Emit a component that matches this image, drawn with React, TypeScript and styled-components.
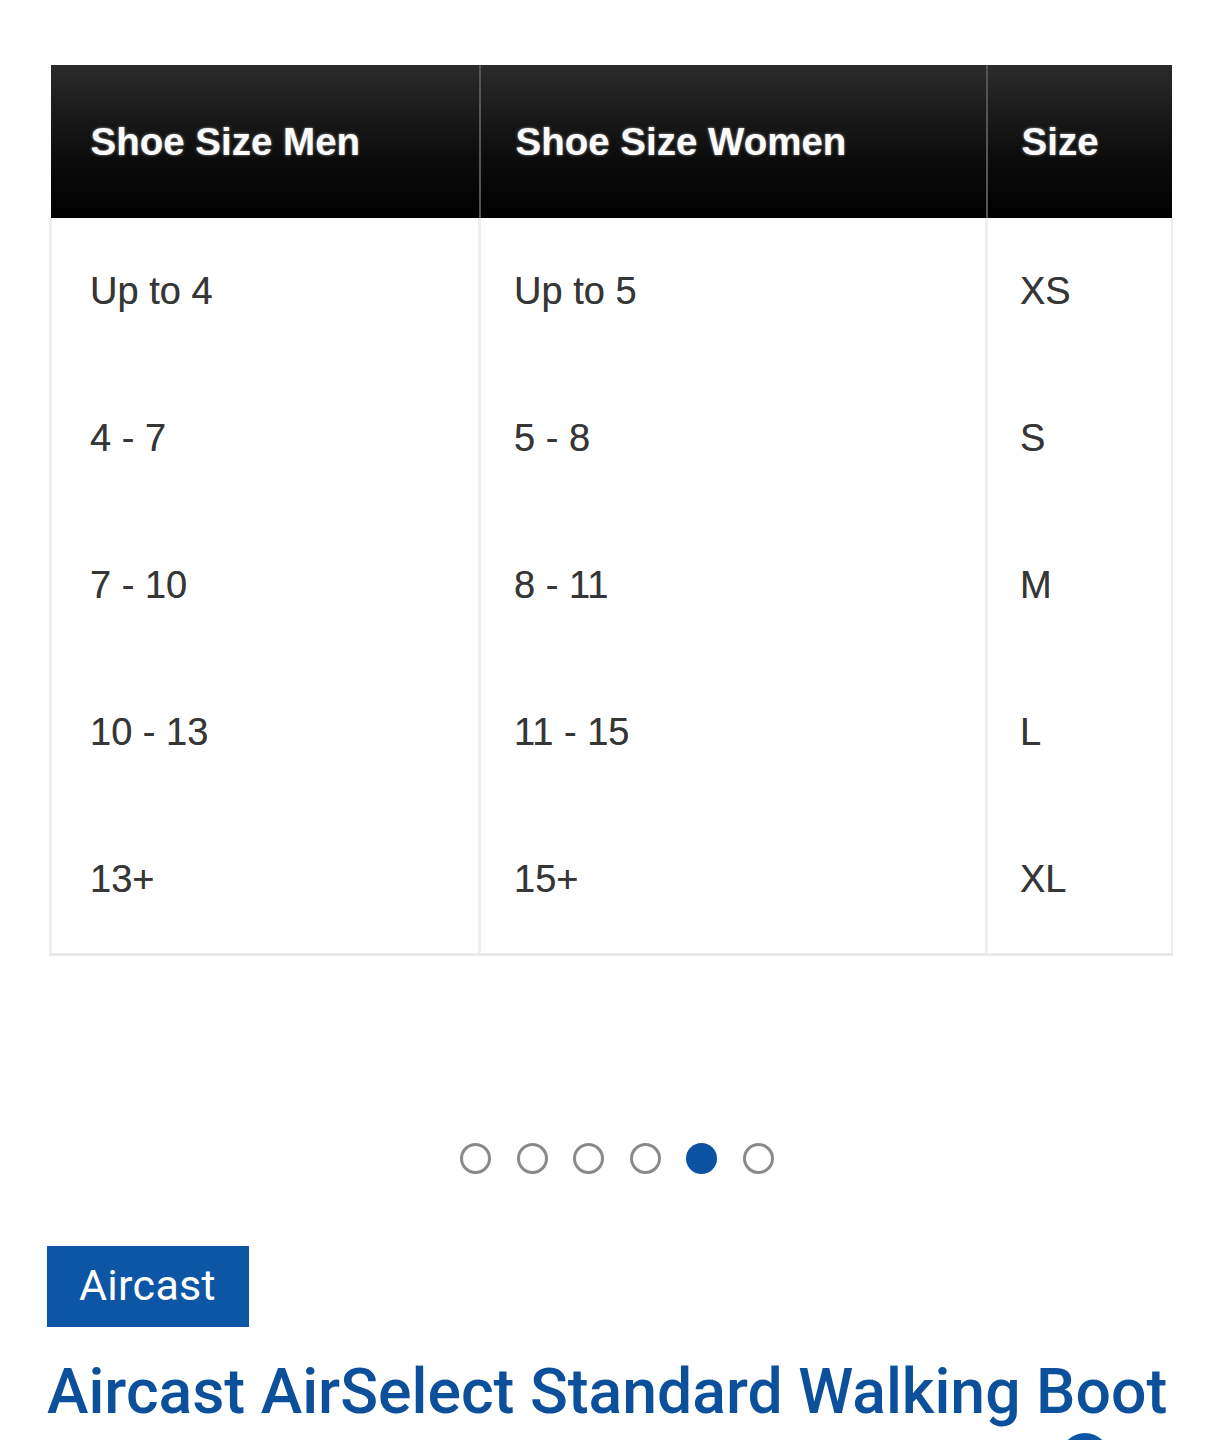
import styled, { createGlobalStyle } from "styled-components";

const GlobalStyle = createGlobalStyle`
    body {
        margin: 0;
        background: #ffffff;
    }
`;

const Page = styled.div`
    width: 1222px;
    height: 1440px;
    overflow: hidden;
    box-sizing: border-box;
    padding-top: 65px;
`;

const Chart = styled.table`
    margin-left: 49px;
    width: 1121px;
    border-collapse: collapse;
    table-layout: fixed;
    font-family: "Liberation Sans", Arial, sans-serif;
`;

const HeadCell = styled.th<{ $w: number; $pad: number }>`
    width: ${p => p.$w}px;
    height: 153px;
    padding: 0 0 0 ${p => p.$pad + 2}px;
    box-sizing: border-box;
    text-align: left;
    font-size: 38.5px;
    font-weight: 700;
    color: #fbfbfb;
    text-shadow: 0 0 3px rgba(255, 255, 255, 0.55);
    background: linear-gradient(#2b2b2b, #0c0c0c 60%, #000);
    border-left: 2px solid #555;
    &:first-child {
        border-left: none;
    }
`;

const Cell = styled.td<{ $pad: number }>`
    height: 147px;
    padding: 0 0 0 ${p => p.$pad}px;
    font-size: 38px;
    color: #363636;
    text-shadow: 0 0 0.6px rgba(0, 0, 0, 0.5);
    border-left: 3px solid #eeeeee;
    &:last-child {
        border-right: 2px solid #eeeeee;
    }
`;

const BodyRow = styled.tr`
    &:last-child td {
        border-bottom: 3px solid #e9e9e9;
    }
`;

const Dots = styled.div`
    display: flex;
    justify-content: center;
    gap: 25.5px;
    margin-top: 187px;
    padding-left: 12px;
`;

const Dot = styled.span<{ $active?: boolean }>`
    width: 31px;
    height: 31px;
    border-radius: 50%;
    box-sizing: border-box;
    border: ${p => (p.$active ? "none" : "3px solid #8a8a8a")};
    background: ${p => (p.$active ? "#0b52a2" : "transparent")};
`;

const Info = styled.div`
    padding: 72px 0 0 47px;
    font-family: Roboto, "Liberation Sans", sans-serif;
`;

const Brand = styled.div`
    display: inline-block;
    width: 202px;
    height: 81px;
    box-sizing: border-box;
    padding-left: 32px;
    background: #0d56a6;
    color: #ffffff;
    font-size: 43px;
    letter-spacing: 0.3px;
    line-height: 78px;
`;

const Title = styled.h1`
    margin: 25px 0 0 0;
    color: #0c4f9b;
    font-size: 62.5px;
    font-weight: 500;
    line-height: 80px;
    white-space: nowrap;
`;

const Badge = styled.span`
    display: block;
    width: 50px;
    height: 50px;
    margin: 1px 0 0 1013px;
    border-radius: 50%;
    background: #0d56a6;
`;

const rows = [
    ["Up to 4", "Up to 5", "XS"],
    ["4 - 7", "5 - 8", "S"],
    ["7 - 10", "8 - 11", "M"],
    ["10 - 13", "11 - 15", "L"],
    ["13+", "15+", "XL"],
];

const widths = [429, 507, 185];
const pads = [38, 33, 32];

export default function App() {
    return (
        <Page>
            <GlobalStyle />
            <Chart>
                <thead>
                    <tr>
                        {["Shoe Size Men", "Shoe Size Women", "Size"].map((h, i) => (
                            <HeadCell key={h} $w={widths[i]} $pad={pads[i]}>{h}</HeadCell>
                        ))}
                    </tr>
                </thead>
                <tbody>
                    {rows.map(r => (
                        <BodyRow key={r[2]}>
                            {r.map((c, i) => (
                                <Cell key={i} $pad={pads[i]}>{c}</Cell>
                            ))}
                        </BodyRow>
                    ))}
                </tbody>
            </Chart>
            <Dots>
                {[0, 1, 2, 3, 4, 5].map(i => (
                    <Dot key={i} $active={i === 4} />
                ))}
            </Dots>
            <Info>
                <Brand>Aircast</Brand>
                <Title>Aircast AirSelect Standard Walking Boot</Title>
                <Badge />
            </Info>
        </Page>
    );
}
